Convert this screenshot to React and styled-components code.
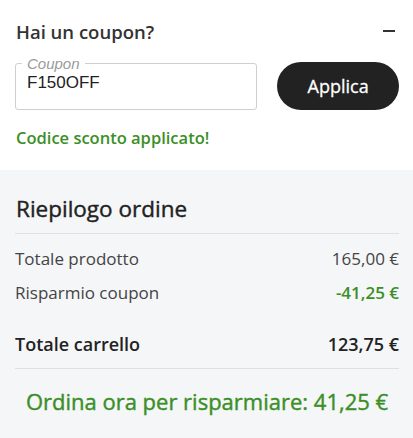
import React, { useState } from 'react';
import styled, { createGlobalStyle, css } from 'styled-components';

const GlobalStyle = createGlobalStyle`
  html, body {
    margin: 0;
    padding: 0;
    background: #ffffff;
  }
  body {
    font-family: "Open Sans", "Liberation Sans", sans-serif;
    color: #333;
  }
`;

// Open Sans here has no 500 weight, so medium is faked with a thin stroke
const medium = css`
  font-weight: 400;
  -webkit-text-stroke: 0.4px currentColor;
`;

const Page = styled.div`
  width: 413px;
  height: 438px;
  display: flex;
  flex-direction: column;
  overflow: hidden;
`;

// --- Coupon block ---
const CouponSection = styled.section`
  background: #ffffff;
  padding: 19px 14px 0 15px;
  height: 170px;
  box-sizing: border-box;
`;

const CouponHeader = styled.div`
  display: flex;
  justify-content: space-between;
  align-items: center;
  height: 24px;
`;

const CouponTitle = styled.h3`
  margin: 0;
  font-size: 18.5px;
  font-weight: 600;
  color: #333;
  padding-left: 1px;
`;

const ToggleButton = styled.button`
  width: 24px;
  height: 24px;
  border: none;
  background: none;
  padding: 0;
  margin-right: -2px;
  display: flex;
  align-items: center;
  justify-content: center;
  cursor: pointer;
  span {
    display: block;
    width: 12px;
    height: 2px;
    background: #333;
  }
`;

const CouponRow = styled.div`
  display: flex;
  align-items: center;
  gap: 20px;
  margin-top: 16px;
`;

const Field = styled.fieldset`
  margin: 0;
  width: 243px;
  height: 53px;
  box-sizing: border-box;
  border: 1px solid #cfcfcf;
  border-radius: 3px;
  padding: 0 10px 0 11px;
  position: relative;
  top: -2px;
  legend {
    padding: 0 5px;
    margin-left: -5px;
    font-family: "Liberation Sans", Arial, sans-serif;
    font-style: italic;
    font-size: 15px;
    line-height: 13px;
    color: #9a9a9a;
  }
`;

const Input = styled.input`
  width: 100%;
  border: none;
  outline: none;
  background: transparent;
  padding: 0;
  margin-top: 3px;
  font-family: "Liberation Sans", Arial, sans-serif;
  font-size: 17px;
  color: #222;
`;

const ApplyButton = styled.button`
  width: 122px;
  height: 48px;
  border: none;
  border-radius: 24px;
  background: #222222;
  color: #fff;
  font-family: "Open Sans", sans-serif;
  font-size: 18px;
  ${medium};
  -webkit-text-stroke-width: 0.3px;
  cursor: pointer;
`;

const SuccessText = styled.p`
  margin: 14px 0 0 1px;
  font-size: 16.5px;
  font-weight: 600;
  color: #3b8f27;
`;

// --- Summary block ---
const Summary = styled.section`
  flex: 1;
  background: #f5f6f8;
  padding: 24px 14px 0 15px;
`;

const SummaryTitle = styled.h2`
  margin: 0;
  font-size: 22.5px;
  ${medium};
  color: #222;
  line-height: 30px;
  padding-left: 1px;
  padding-bottom: 9px;
  border-bottom: 1px solid #dfe0e2;
`;

const Rows = styled.div`
  display: flex;
  flex-direction: column;
  padding-top: 7px;
`;

const Row = styled.div`
  display: flex;
  justify-content: space-between;
  align-items: center;
  box-sizing: border-box;
  height: ${({ $tall }) => ($tall ? '52px' : '34px')};
  padding-top: ${({ $tall }) => ($tall ? '18px' : '0')};
  font-size: ${({ $strong }) => ($strong ? '18px' : '17px')};
  color: ${({ $strong }) => ($strong ? '#222' : '#444')};
  font-weight: ${({ $strong }) => ($strong ? 600 : 400)};
`;

const Amount = styled.span`
  color: ${({ $green }) => ($green ? '#3b8f27' : 'inherit')};
  font-weight: ${({ $green }) => ($green ? 600 : 'inherit')};
`;

const Divider = styled.hr`
  border: none;
  border-top: 1px solid #dfe0e2;
  margin: 7px 0 0 0;
`;

const SaveText = styled.p`
  margin: 17px 0 0 0;
  text-align: center;
  font-size: 22px;
  ${medium};
  color: #3b8f27;
`;

const App = () => {
  const [code, setCode] = useState('F150OFF');

  return (
    <Page>
      <GlobalStyle />
      <CouponSection>
        <CouponHeader>
          <CouponTitle>Hai un coupon?</CouponTitle>
          <ToggleButton aria-label="Chiudi"><span /></ToggleButton>
        </CouponHeader>
        <CouponRow>
          <Field>
            <legend>Coupon</legend>
            <Input value={code} onChange={(e) => setCode(e.target.value)} />
          </Field>
          <ApplyButton>Applica</ApplyButton>
        </CouponRow>
        <SuccessText>Codice sconto applicato!</SuccessText>
      </CouponSection>

      <Summary>
        <SummaryTitle>Riepilogo ordine</SummaryTitle>
        <Rows>
          <Row><span>Totale prodotto</span><Amount>165,00 €</Amount></Row>
          <Row><span>Risparmio coupon</span><Amount $green>-41,25 €</Amount></Row>
          <Row $tall $strong><span>Totale carrello</span><Amount>123,75 €</Amount></Row>
        </Rows>
        <Divider />
        <SaveText>Ordina ora per risparmiare: 41,25 €</SaveText>
      </Summary>
    </Page>
  );
};

export default App;
